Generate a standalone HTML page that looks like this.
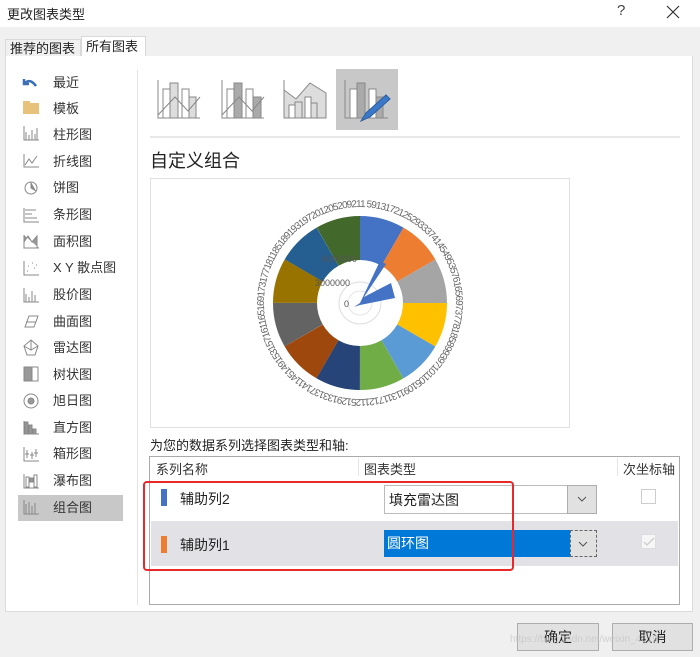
<!DOCTYPE html>
<html><head><meta charset="utf-8"><style>
*{margin:0;padding:0;box-sizing:border-box}
body{width:700px;height:657px;background:#f0f0f0;position:relative;overflow:hidden;font-family:"Liberation Sans","Noto Sans CJK SC",sans-serif;color:#222;font-size:13px}
.abs{position:absolute}
.menu div{position:absolute;left:53px;font-size:13px;color:#333;line-height:16px}
</style></head><body>
<div class="abs" style="left:0;top:0;width:700px;height:27px;background:#fff"></div>
<div class="abs" style="left:7px;top:4px;font-size:13px">更改图表类型</div>
<div class="abs" style="left:617px;top:2px;font-size:15px;color:#444">?</div>
<svg class="abs" style="left:666px;top:5px" width="14" height="14"><path d="M1 1L13 13M13 1L1 13" stroke="#333" stroke-width="1.2"/></svg>
<div class="abs" style="left:5px;top:39px;width:76px;height:18px;background:#f0f0f0;border:1px solid #d9d9d9;border-bottom:none;font-size:13px;padding-left:4px;line-height:17px">推荐的图表</div>
<div class="abs" style="left:81px;top:36px;width:65px;height:21px;background:#fff;border:1px solid #d9d9d9;border-bottom:none;font-size:13px;padding-left:4px;line-height:20px">所有图表</div>
<div class="abs" style="left:5px;top:56px;width:688px;height:556px;background:#fff;border:1px solid #dcdcdc;border-top:none"></div>
<div class="abs" style="left:137px;top:70px;width:1px;height:535px;background:#e3e3e3"></div>
<div class="abs" style="left:18px;top:495px;width:105px;height:26px;background:#c8c8c8"></div>
<div class="menu">
<div style="top:75px">最近</div><div style="top:101px">模板</div><div style="top:127px">柱形图</div><div style="top:154px">折线图</div><div style="top:180px">饼图</div><div style="top:207px">条形图</div><div style="top:234px">面积图</div><div style="top:260px">X Y 散点图</div><div style="top:287px">股价图</div><div style="top:314px">曲面图</div><div style="top:340px">雷达图</div><div style="top:367px">树状图</div><div style="top:393px">旭日图</div><div style="top:420px">直方图</div><div style="top:446px">箱形图</div><div style="top:473px">瀑布图</div><div style="top:500px">组合图</div>
</div>
<svg class="abs" style="left:20px;top:72px" width="24" height="450" fill="none" stroke="#888" stroke-width="1">
<path d="M16 14 Q10 6 5 11 M4 7 L4 12 L9 12" stroke="#3a6fb5" stroke-width="2.5"/>
<rect x="3" y="31" width="16" height="11" fill="#e8c27a" stroke="none"/><rect x="3" y="29" width="7" height="3" fill="#e8c27a" stroke="none"/>
<path d="M4 54V68H19M6 68V60M9 68V63M12 68V58M15 68V62M17 68V56"/>
<path d="M4 82V95H19M5 93L9 87L12 91L17 84"/>
<circle cx="11" cy="116" r="6"/><path d="M11 110V116L16 119" fill="#888"/>
<path d="M4 136V150H19M5 138H16M5 142H12M5 146H17"/>
<path d="M4 163V176H19M4 170L8 164L12 170L17 164V176H4Z" fill="#999"/>
<path d="M4 189V203H19M8 194h1M12 191h1M14 196h1M7 199h1M16 193h1"/>
<path d="M4 216V230H19M6 230V222M9 230V225M12 230V219M15 230V223"/>
<path d="M5 255L9 244H18L14 255Z M6 250H16"/>
<path d="M11 268L18 274L15 283H7L4 274Z M11 268V278L4 274M11 278L18 274"/>
<rect x="4" y="295" width="14" height="14"/><rect x="4" y="295" width="8" height="14" fill="#999"/>
<circle cx="11" cy="329" r="7"/><circle cx="11" cy="329" r="3" fill="#999"/>
<path d="M4 349V362H19" /><rect x="5" y="350" width="3" height="12" fill="#999"/><rect x="9" y="353" width="3" height="9" fill="#999"/><rect x="13" y="357" width="3" height="5" fill="#999"/>
<path d="M4 375V389H19M7 378V386M12 380V387M16 377V385M5 382H9M10 383H14M14 381H18"/>
<path d="M4 402V416H19" /><rect x="6" y="405" width="3" height="10"/><rect x="10" y="406" width="3" height="4" fill="#999"/><rect x="14" y="403" width="3" height="12"/>
<path d="M4 428V442H19M6 442V432M9 442V430M12 442V434M15 442V431"/>
</svg>
<div class="abs" style="left:336px;top:69px;width:62px;height:61px;background:#c8c8c8"></div>
<svg class="abs" style="left:150px;top:75px" width="250" height="50" fill="#ddd" stroke="#888" stroke-width="1">
<path d="M8 5V43H50" fill="none"/><rect x="13" y="14" width="7" height="29" fill="#fff"/><rect x="20" y="8" width="8" height="35"/><rect x="32" y="14" width="7" height="29" fill="#fff"/><rect x="39" y="22" width="7" height="21"/><path d="M8 40L25 22L38 36L50 22" fill="none"/>
<path d="M72 5V43H114" fill="none"/><rect x="77" y="14" width="7" height="29" fill="#fff"/><rect x="84" y="8" width="8" height="35" fill="#aaa"/><rect x="96" y="14" width="7" height="29" fill="#fff"/><rect x="103" y="22" width="8" height="21" fill="#aaa"/><path d="M72 40L89 22L102 36L114 22" fill="none"/>
<path d="M134 5V43H176" fill="none"/><path d="M134 15L146 24L160 8L176 18V43H134Z"/><rect x="139" y="30" width="6" height="13" fill="#fff"/><rect x="145" y="27" width="7" height="16"/><rect x="155" y="22" width="6" height="21" fill="#fff"/><rect x="161" y="28" width="6" height="15"/>
<path d="M195 5V43H238" fill="none"/><rect x="200" y="14" width="7" height="29" fill="#fff"/><rect x="207" y="8" width="8" height="35" fill="#aaa"/><rect x="219" y="14" width="7" height="29" fill="#fff"/><rect x="226" y="22" width="7" height="21" fill="#aaa"/>
<path d="M211 46L216 38L236 20L240 24L220 42Z" fill="#3a78c9" stroke="#2d5f9f"/>
</svg>
<div class="abs" style="left:150px;top:136px;width:530px;height:2px;background:#e8e8e8"></div>
<div class="abs" style="left:150px;top:147px;font-size:18px;color:#222">自定义组合</div>
<div class="abs" style="left:150px;top:178px;width:420px;height:250px;border:1px solid #e0e0e0;background:#fff"></div>
<svg class="abs" style="left:250px;top:195px" width="220" height="220">
<g transform="rotate(-90 110 108)" fill="none" stroke-width="44">
<circle cx="110" cy="108" r="65" stroke="#4472c4" stroke-dasharray="34.03 400" stroke-dashoffset="0"/>
<circle cx="110" cy="108" r="65" stroke="#ed7d31" stroke-dasharray="34.03 400" stroke-dashoffset="-34.03"/>
<circle cx="110" cy="108" r="65" stroke="#a5a5a5" stroke-dasharray="34.03 400" stroke-dashoffset="-68.07"/>
<circle cx="110" cy="108" r="65" stroke="#ffc000" stroke-dasharray="34.03 400" stroke-dashoffset="-102.1"/>
<circle cx="110" cy="108" r="65" stroke="#5b9bd5" stroke-dasharray="34.03 400" stroke-dashoffset="-136.1"/>
<circle cx="110" cy="108" r="65" stroke="#70ad47" stroke-dasharray="34.03 400" stroke-dashoffset="-170.2"/>
<circle cx="110" cy="108" r="65" stroke="#264478" stroke-dasharray="34.03 400" stroke-dashoffset="-204.2"/>
<circle cx="110" cy="108" r="65" stroke="#9e480e" stroke-dasharray="34.03 400" stroke-dashoffset="-238.2"/>
<circle cx="110" cy="108" r="65" stroke="#636363" stroke-dasharray="34.03 400" stroke-dashoffset="-272.3"/>
<circle cx="110" cy="108" r="65" stroke="#997300" stroke-dasharray="34.03 400" stroke-dashoffset="-306.3"/>
<circle cx="110" cy="108" r="65" stroke="#255e91" stroke-dasharray="34.03 400" stroke-dashoffset="-340.3"/>
<circle cx="110" cy="108" r="65" stroke="#43682b" stroke-dasharray="34.03 410" stroke-dashoffset="-374.4"/>
</g>
<circle cx="110" cy="108" r="21" fill="none" stroke="#ddd"/>
<circle cx="110" cy="108" r="12" fill="none" stroke="#e5e5e5"/>
<path d="M110 108L130 66L136 69L114 102L141 88L145 103L110 110L104 112Z" fill="#4472c4"/>
<text x="94" y="112" font-size="9" fill="#555">0</text>
<text x="65" y="91" font-size="9" fill="#555">3000000</text>
<text x="72" y="67" font-size="9" fill="#555">6000000</text>
<path id="rp" d="M110 12 A96 96 0 1 1 109.9 12" fill="none"/>
<text font-size="10" fill="#666" letter-spacing="-1"><textPath href="#rp">1 5913172125293337414549535761656973778185899397101105109113117121125129133137141145149153157161165169173177181185189193197201205209213217221225229233237241245249253257261265269273277281285289293297301305309313317321</textPath></text>
</svg>
<div class="abs" style="left:150px;top:435px;font-size:13px">为您的数据系列选择图表类型和轴:</div>
<div class="abs" style="left:149px;top:456px;width:531px;height:149px;border:1px solid #aaa;background:#fff"></div>
<div class="abs" style="left:358px;top:458px;width:1px;height:18px;background:#e5e5e5"></div>
<div class="abs" style="left:617px;top:458px;width:1px;height:18px;background:#e5e5e5"></div>
<div class="abs" style="left:156px;top:459px;font-size:13px;color:#333">系列名称</div>
<div class="abs" style="left:364px;top:459px;font-size:13px;color:#333">图表类型</div>
<div class="abs" style="left:623px;top:459px;font-size:13px;color:#333">次坐标轴</div>
<div class="abs" style="left:151px;top:521px;width:527px;height:45px;background:#e1e1e6"></div>
<div class="abs" style="left:161px;top:489px;width:6px;height:17px;background:#4472c4"></div>
<div class="abs" style="left:161px;top:536px;width:6px;height:17px;background:#ed7d31"></div>
<div class="abs" style="left:180px;top:489px;font-size:14px">辅助列2</div>
<div class="abs" style="left:180px;top:535px;font-size:14px">辅助列1</div>
<div class="abs" style="left:384px;top:485px;width:213px;height:29px;border:1px solid #bbb;background:#fff;font-size:14px;padding:4px 0 0 4px">填充雷达图</div>
<div class="abs" style="left:567px;top:485px;width:30px;height:29px;border:1px solid #adadad;background:#e1e1e1"></div>
<svg class="abs" style="left:577px;top:495px" width="10" height="8"><path d="M1 2L5 6L9 2" fill="none" stroke="#555"/></svg>
<div class="abs" style="left:384px;top:530px;width:186px;height:27px;background:#0078d7;color:#fff;font-size:14px;padding:3px 0 0 3px">圆环图</div>
<div class="abs" style="left:570px;top:530px;width:27px;height:27px;border:1px dashed #666;background:#e1e1e1"></div>
<svg class="abs" style="left:578px;top:540px" width="10" height="8"><path d="M1 2L5 6L9 2" fill="none" stroke="#555"/></svg>
<div class="abs" style="left:641px;top:489px;width:15px;height:15px;border:1px solid #ccc;background:#fff"></div>
<div class="abs" style="left:641px;top:534px;width:15px;height:15px;border:1px solid #ddd;background:#f6f6f6"></div>
<svg class="abs" style="left:643px;top:537px" width="12" height="10"><path d="M1 5L4 8L11 1" fill="none" stroke="#ccc" stroke-width="1.3"/></svg>
<div class="abs" style="left:143px;top:481px;width:371px;height:90px;border:2.5px solid #e8282b;border-radius:4px"></div>
<div class="abs" style="left:517px;top:623px;width:82px;height:28px;border:1px solid #adadad;background:#e1e1e1;font-size:14px;text-align:center;line-height:26px">确定</div>
<div class="abs" style="left:612px;top:623px;width:81px;height:28px;border:1px solid #adadad;background:#e1e1e1;font-size:14px;text-align:center;line-height:26px">取消</div>
<div class="abs" style="left:510px;top:634px;font-size:10px;color:rgba(200,200,200,0.8)">https://blog.csdn.net/weixin_4019</div>
</body></html>
